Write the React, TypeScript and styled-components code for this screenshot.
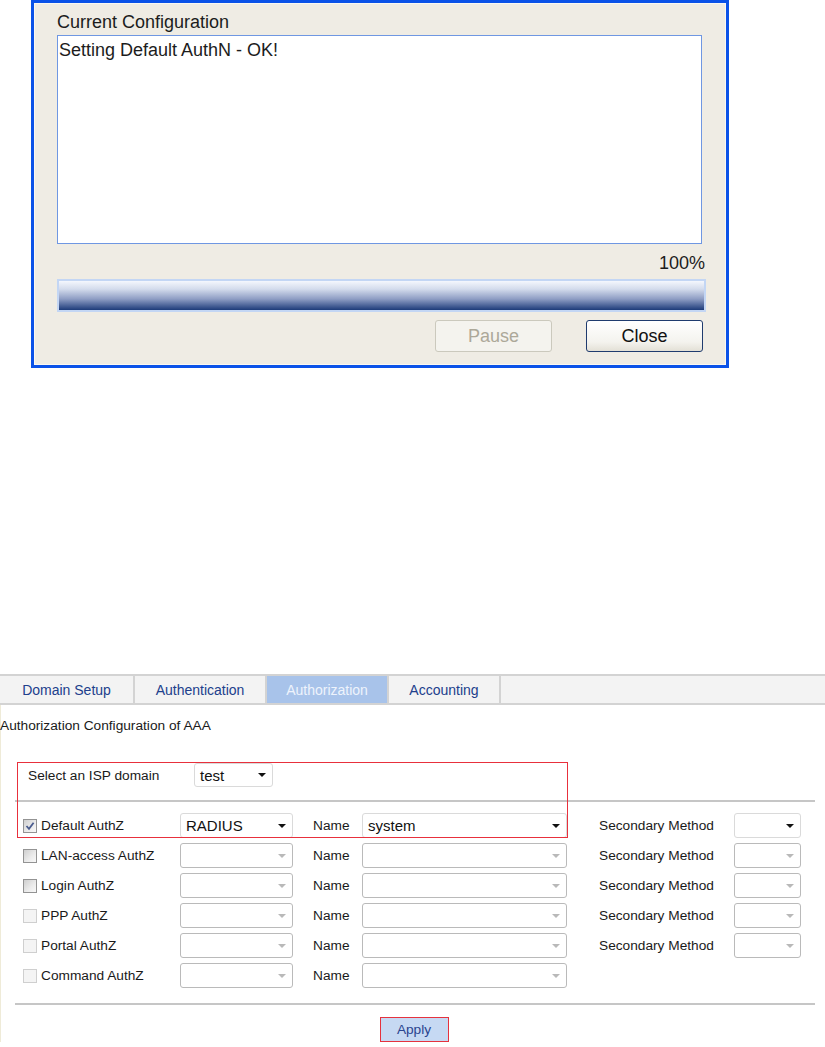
import styled, { createGlobalStyle } from "styled-components";

const GlobalStyle = createGlobalStyle`
  html, body {
    margin: 0;
    padding: 0;
    background: #ffffff;
    font-family: "Liberation Sans", Arial, sans-serif;
  }
  * { box-sizing: border-box; }
`

const Page = styled.div`
  width: 825px;
  display: flex;
  flex-direction: column;
`

/* ---------- progress dialog ---------- */

const Dialog = styled.div`
  margin-left: 31px;
  width: 698px;
  height: 368px;
  border: 3px solid #0a52e8;
  background: #efece4;
  box-shadow: inset 0 0 0 1px #f9f8f3;
  padding: 9px 21px 13px 23px;
  display: flex;
  flex-direction: column;
  font-size: 18px;
  line-height: 21px;
  color: #1c1c1c;
`

const Caption = styled.div`
  height: 21px;
`

const LogBox = styled.div`
  margin-top: 2px;
  width: 645px;
  height: 209px;
  background: #ffffff;
  border: 1px solid #6f97e2;
  padding: 4px 1px;
`

const Percent = styled.div`
  margin-top: 9px;
  width: 648px;
  text-align: right;
`

const ProgressBar = styled.div`
  margin-top: 5px;
  width: 649px;
  height: 33px;
  border: 2px solid #c3d6f4;
  background: linear-gradient(to bottom, #f4f7fd 0%, #d3dbec 28%, #8e9dc4 62%, #1d3b7a 100%);
`

const ButtonRow = styled.div`
  margin-top: 8px;
  width: 646px;
  display: flex;
  justify-content: flex-end;
  gap: 34px;
`

const DialogButton = styled.button<{ $disabled?: boolean }>`
  width: 117px;
  height: 32px;
  border-radius: 3px;
  font-family: inherit;
  font-size: 18px;
  padding: 0;
  border: 1px solid ${p => p.$disabled ? "#cbc9bd" : "#1f3b6e"};
  color: ${p => p.$disabled ? "#aca899" : "#111111"};
  background: ${p => p.$disabled
    ? "#f4f3ee"
    : "linear-gradient(to bottom, #ffffff 0%, #f4f3ee 70%, #e3e0d6 100%)"};
`

/* ---------- AAA panel ---------- */

const Panel = styled.div`
  margin-top: 306px;
  display: flex;
  flex-direction: column;
  border-left: 1px solid #efebd8;
`

const TabBar = styled.div`
  height: 31px;
  display: flex;
  background: #f3f3f3;
  border-top: 2px solid #d3d3d3;
  border-bottom: 2px solid #d3d3d3;
  margin-left: -1px;
`

const Tab = styled.div<{ $width: number, $active?: boolean }>`
  width: ${p => p.$width}px;
  display: flex;
  align-items: center;
  justify-content: center;
  border-right: 2px solid #d3d3d3;
  font-size: 14px;
  color: ${p => p.$active ? "#eef3fc" : "#21408c"};
  background: ${p => p.$active ? "#a8c3ea" : "transparent"};
`

const Heading = styled.div`
  margin: 13px 0 0 -1px;
  font-size: 13.7px;
  line-height: 16px;
  color: #1a1a1a;
`

const Section = styled.div`
  position: relative;
  margin: 29px 0 0 14px;
  width: 800px;
  display: flex;
  flex-direction: column;
  font-size: 13.7px;
  color: #1a1a1a;
`

const Annotation = styled.div`
  position: absolute;
  left: 2px;
  top: -1px;
  width: 551px;
  height: 76px;
  border: 1px solid #e8303c;
  pointer-events: none;
  z-index: 2;
`

const IspRow = styled.div`
  height: 24px;
  display: flex;
  align-items: center;
  padding-left: 13px;
`

const IspLabel = styled.span`
  width: 166px;
`

const Rule = styled.div<{ $top: number }>`
  margin-top: ${p => p.$top}px;
  height: 2px;
  background: #c6c6c6;
`

const Rows = styled.div`
  margin-top: 11px;
  display: flex;
  flex-direction: column;
  gap: 5px;
`

const Row = styled.div`
  height: 25px;
  display: grid;
  grid-template-columns: 157px 113px 69px 205px 167px 67px;
  align-items: center;
  padding-left: 8px;
`

const CheckCell = styled.label`
  display: flex;
  align-items: center;
  gap: 4px;
`

const Box = styled.span<{ $disabled?: boolean }>`
  width: 14px;
  height: 14px;
  display: flex;
  align-items: center;
  justify-content: center;
  border: 1px solid ${p => p.$disabled ? "#cfcfcf" : "#939393"};
  background: ${p => p.$disabled
    ? "#f4f4f4"
    : "linear-gradient(135deg, #cfcfcf 0%, #ececec 60%, #f8f8f8 100%)"};
`

const FieldLabel = styled.span<{ $pad: number }>`
  padding-left: ${p => p.$pad}px;
  white-space: nowrap;
`

const SelectBox = styled.div<{ $width?: number, $enabled?: boolean, $height?: number }>`
  width: ${p => p.$width ? `${p.$width}px` : "100%"};
  height: ${p => p.$height ?? 25}px;
  display: flex;
  align-items: center;
  justify-content: space-between;
  padding: 0 6px 0 5px;
  border: 1px solid ${p => p.$enabled ? "#dadada" : "#bababa"};
  border-radius: 3px;
  background: #ffffff;
  font-size: 15px;
  color: #111111;
`

const Arrow = styled.span<{ $enabled?: boolean }>`
  width: 0;
  height: 0;
  border-left: 4px solid transparent;
  border-right: 4px solid transparent;
  border-top: 4px solid ${p => p.$enabled ? "#111111" : "#b9b9b9"};
`

const ApplyRow = styled.div`
  margin-top: 12px;
  display: flex;
  justify-content: center;
  padding-right: 2px;
`

const ApplyButton = styled.button`
  width: 69px;
  height: 25px;
  padding: 0;
  border: 1px solid #e5323e;
  background: #c6d9f3;
  color: #2a448f;
  font-family: inherit;
  font-size: 13.7px;
`

type AuthRow = {
  label: string
  checked?: boolean
  disabled?: boolean
  method?: string
  name?: string
  secondary?: boolean
  active?: boolean
}

const rows: AuthRow[] = [
  { label: "Default AuthZ", checked: true, method: "RADIUS", name: "system", secondary: true, active: true },
  { label: "LAN-access AuthZ", secondary: true },
  { label: "Login AuthZ", secondary: true },
  { label: "PPP AuthZ", disabled: true, secondary: true },
  { label: "Portal AuthZ", disabled: true, secondary: true },
  { label: "Command AuthZ", disabled: true },
]

const tabs = [
  { title: "Domain Setup", width: 135 },
  { title: "Authentication", width: 132 },
  { title: "Authorization", width: 122, active: true },
  { title: "Accounting", width: 112 },
]

const Select = ({ value, enabled, width, height }: { value?: string, enabled?: boolean, width?: number, height?: number }) => (
  <SelectBox $enabled={enabled} $width={width} $height={height}>
    <span>{value}</span>
    <Arrow $enabled={enabled} />
  </SelectBox>
)

const App = () => {
  return (
    <Page>
      <GlobalStyle />
      <Dialog>
        <Caption>Current Configuration</Caption>
        <LogBox>Setting Default AuthN - OK!</LogBox>
        <Percent>100%</Percent>
        <ProgressBar />
        <ButtonRow>
          <DialogButton $disabled>Pause</DialogButton>
          <DialogButton>Close</DialogButton>
        </ButtonRow>
      </Dialog>

      <Panel>
        <TabBar>
          {tabs.map(t => (
            <Tab key={t.title} $width={t.width} $active={t.active}>{t.title}</Tab>
          ))}
        </TabBar>
        <Heading>Authorization Configuration of AAA</Heading>
        <Section>
          <IspRow>
            <IspLabel>Select an ISP domain</IspLabel>
            <Select value="test" enabled width={79} height={24} />
          </IspRow>
          <Rule $top={13} />
          <Rows>
            {rows.map(r => (
              <Row key={r.label}>
                <CheckCell>
                  <Box $disabled={r.disabled}>
                    {r.checked && (
                      <svg width="10" height="10" viewBox="0 0 10 10">
                        <polyline points="1.5,5 4,7.8 8.6,1.8" fill="none" stroke="#4a5c8e" strokeWidth="1.8" />
                      </svg>
                    )}
                  </Box>
                  {r.label}
                </CheckCell>
                <Select value={r.method} enabled={r.active} />
                <FieldLabel $pad={20}>Name</FieldLabel>
                <Select value={r.name} enabled={r.active} />
                {r.secondary ? <FieldLabel $pad={32}>Secondary Method</FieldLabel> : <span />}
                {r.secondary ? <Select enabled={r.active} /> : <span />}
              </Row>
            ))}
          </Rows>
          <Rule $top={15} />
          <ApplyRow>
            <ApplyButton>Apply</ApplyButton>
          </ApplyRow>
          <Annotation />
        </Section>
      </Panel>
    </Page>
  )
}

export default App
